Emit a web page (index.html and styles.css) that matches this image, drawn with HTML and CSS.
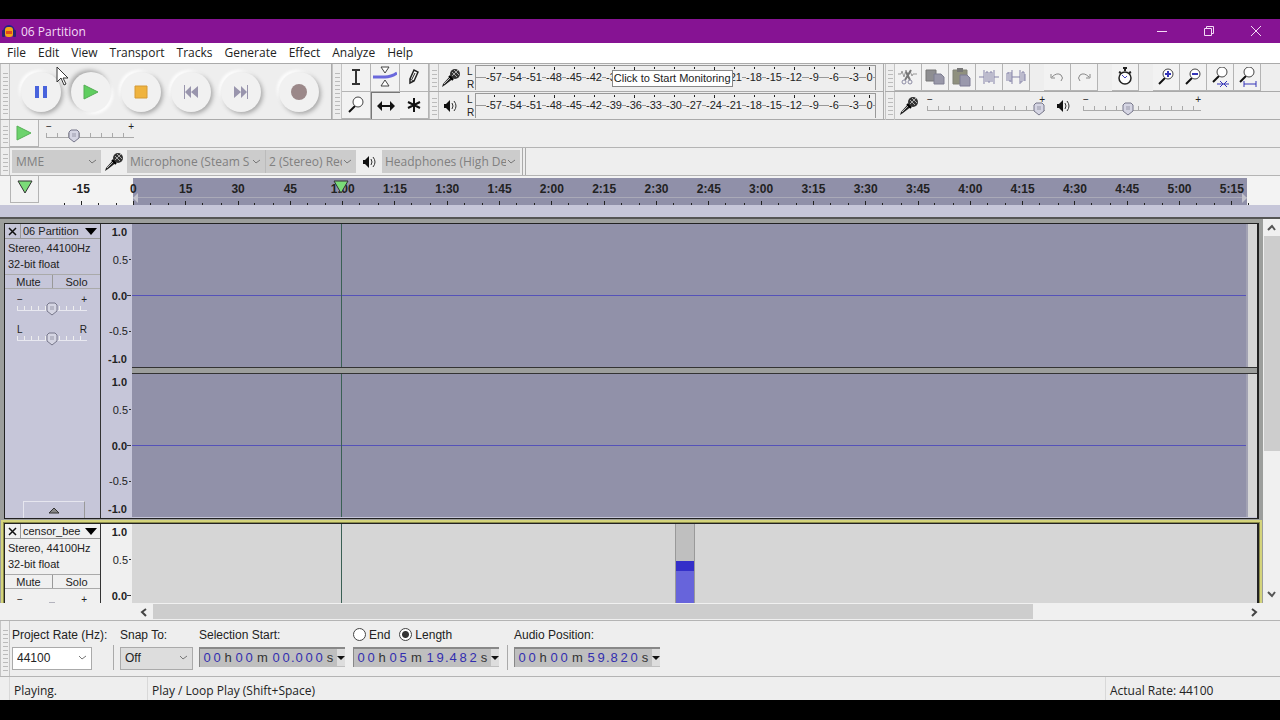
FILE: index.html
```html
<!DOCTYPE html>
<html lang="en">
<head>
  <meta charset="utf-8">
  <title>06 Partition</title>
  <link rel="stylesheet" href="styles.css">
</head>
<body>
  <svg class="defs" width="0" height="0" aria-hidden="true">
    <symbol id="mic" viewBox="0 0 20 20">
      <path d="M1 19l1-3 8-9 3 3-9 7z" fill="#222"/>
      <path d="M3 16l7-7" stroke="#bbb"/>
      <circle cx="14" cy="6" r="5" fill="#333"/>
      <path d="M11 4l5 5M13 2l5 5M11 8l6-6" stroke="#aaa"/>
      <path d="M8 8l4 4" stroke="#000" stroke-width="2"/>
    </symbol>
    <symbol id="speaker" viewBox="0 0 14 14">
      <path d="M0 5h2l4-4v12l-4-4H0z" fill="#111"/>
      <path d="M8 4q2 3 0 6M10 2q4 5 0 10" fill="none" stroke="#333"/>
    </symbol>
    <symbol id="lens" viewBox="0 0 20 20">
      <path d="M3 17l6-6" stroke="#111" stroke-width="2"/>
      <circle cx="12" cy="7" r="5" fill="#fff" stroke="#444"/>
    </symbol>
  </svg>

  <header class="titlebar">
    <svg width="14" height="14" viewBox="0 0 14 14">
      <path d="M2 8a5 6 0 0 1 10 0" fill="none" stroke="#22228a" stroke-width="2"/>
      <rect x="3" y="3" width="8" height="10" rx="3" fill="#f2a516"/>
      <path d="M4 7h6v3H4z" fill="#e2491c"/>
      <rect x="0" y="6" width="3" height="7" rx="1" fill="#252374"/>
      <rect x="11" y="6" width="3" height="7" rx="1" fill="#252374"/>
    </svg>
    <span class="title">06 Partition</span>
    <button aria-label="Minimize"><svg width="12" height="12"><path d="M1 6.500h10" stroke="#f3dcf5"/></svg></button>
    <button aria-label="Restore"><svg width="12" height="12" fill="none" stroke="#f3dcf5"><path d="M1.500 3.500h7v7h-7zM3.500 3v-1.500h7v7H9"/></svg></button>
    <button aria-label="Close"><svg width="12" height="12"><path d="M1 1l10 10M11 1L1 11" stroke="#f3dcf5"/></svg></button>
  </header>

  <nav class="menu">
    <button>File</button><button>Edit</button><button>View</button><button>Transport</button><button>Tracks</button><button>Generate</button><button>Effect</button><button>Analyze</button><button>Help</button>
  </nav>

  <div class="toolbars">
    <section class="transport">
      <i class="grip"></i>
      <div class="round-buttons">
        <button aria-label="Pause"><svg width="14" height="14"><path d="M1 1h4v12H1zM9 1h4v12H9z" fill="#4863dc"/></svg></button>
        <button class="pressed" aria-label="Play"><svg width="16" height="16"><path d="M1 1l14 7-14 7z" fill="#5fce5f" stroke="#55ad55"/></svg></button>
        <button aria-label="Stop"><svg width="14" height="14"><path d="M1 1h12v12H1z" fill="#efb33e" stroke="#d49a36"/></svg></button>
        <button aria-label="Skip to Start"><svg width="16" height="14" fill="#9995ad"><path d="M1 0h1v14H1zM8 1v12L2 7zM15 1v12L8 7z"/></svg></button>
        <button aria-label="Skip to End"><svg width="16" height="14" fill="#9995ad"><path d="M14 0h1v14h-1zM1 1v12l7-6zM8 1v12l6-6z"/></svg></button>
        <button class="record" aria-label="Record"><svg width="16" height="16"><circle cx="8" cy="8" r="8" fill="#9b8889"/></svg></button>
      </div>
    </section>

    <section class="tools">
      <i class="grip"></i>
      <div class="tool-grid">
        <button aria-label="Selection Tool"><svg width="10" height="16" fill="none" stroke="#333" stroke-width="2"><path d="M1 1h8M1 15h8M5 1v14"/></svg></button>
        <button aria-label="Envelope Tool"><svg width="24" height="22"><path d="M0 11h12q6 0 12-4" fill="none" stroke="#6a68dc" stroke-width="3"/><path d="M8 1h8l-4 6zM8 20h8l-4-6z" fill="#fff" stroke="#444"/></svg></button>
        <button aria-label="Draw Tool"><svg width="12" height="18"><path d="M2 15V11L6 2l4 2-4 9z" fill="#fff" stroke="#222" stroke-width="1.500"/><path d="M2 11l4 2M7 5l-3 6" stroke="#222"/></svg></button>
        <button aria-label="Zoom Tool"><svg width="20" height="20"><use href="#lens"/></svg></button>
        <button class="pressed" aria-label="Time Shift Tool"><svg width="18" height="12"><path d="M0 6l5-5v4h8V1l5 5-5 5V7H5v4z" fill="#111"/></svg></button>
        <button aria-label="Multi-Tool"><svg width="16" height="16"><path d="M8 1v14M2 5l12 6M14 5L2 11" stroke="#111" stroke-width="2"/></svg></button>
      </div>
    </section>

    <section class="meters">
      <div class="meter">
        <i class="grip"></i>
        <svg width="20" height="20"><use href="#mic"/></svg>
        <div class="lr"><span>L</span><span>R</span></div>
        <div class="db">
          <span><b>-57</b></span><span><b>-54</b></span><span><b>-51</b></span><span><b>-48</b></span><span><b>-45</b></span><span><b>-42</b></span><span><b>-39</b></span><span><b>-36</b></span><span><b>-33</b></span><span><b>-30</b></span><span><b>-27</b></span><span><b>-24</b></span><span><b>-21</b></span><span><b>-18</b></span><span><b>-15</b></span><span><b>-12</b></span><span><b>-9</b></span><span><b>-6</b></span><span><b>-3</b></span><span><b>0</b></span>
          <button class="monitor">Click to Start Monitoring</button>
        </div>
      </div>
      <div class="meter">
        <i class="grip"></i>
        <svg width="20" height="14"><use href="#speaker"/></svg>
        <div class="lr"><span>L</span><span>R</span></div>
        <div class="db">
          <span><b>-57</b></span><span><b>-54</b></span><span><b>-51</b></span><span><b>-48</b></span><span><b>-45</b></span><span><b>-42</b></span><span><b>-39</b></span><span><b>-36</b></span><span><b>-33</b></span><span><b>-30</b></span><span><b>-27</b></span><span><b>-24</b></span><span><b>-21</b></span><span><b>-18</b></span><span><b>-15</b></span><span><b>-12</b></span><span><b>-9</b></span><span><b>-6</b></span><span><b>-3</b></span><span><b>0</b></span>
        </div>
      </div>
    </section>

    <section class="side">
      <div class="edit">
        <i class="grip"></i>
        <div class="group">
          <button aria-label="Cut"><svg width="20" height="18" fill="none" stroke="#8c8ba4"><path d="M0 6h3l1-3 2 6 2-7 2 6 2-5 2 5 1-2h4" stroke="#999"/><path d="M13 2L7 12M8 4l4 8" stroke="#777" stroke-width="2"/><circle cx="6" cy="14" r="2"/><circle cx="12" cy="14" r="2"/></svg></button>
          <button aria-label="Copy"><svg width="20" height="18"><path d="M1 2h10v11H1z" fill="#8e8e91" stroke="#777"/><path d="M9 6h7l3 3v7H9z" fill="#9998a9" stroke="#7f7f91"/></svg></button>
          <button aria-label="Paste"><svg width="20" height="20"><path d="M1 3h14v14H1z" fill="#8f907e" stroke="#808176"/><path d="M5 1h6v4H5z" fill="#777"/><path d="M8 8h7l3 3v8H8z" fill="#9998ac" stroke="#7c7b94"/></svg></button>
          <button aria-label="Trim Audio"><svg width="20" height="16"><path d="M0 8h5M15 8h5M5 1v14M15 1v14M7 13V3M9 13V3M11 13V3M13 13V3M7 3h2M9 13h2M11 3h2" fill="none" stroke="#8583a8"/></svg></button>
          <button aria-label="Silence Audio"><svg width="20" height="16"><path d="M1 12V4M3 12V3M5 13V3M6 1v14M1 4h2M3 12h2M6 8h8M14 1v14M16 13V3M18 12V3M14 13h2M16 3h2M19 12V5" fill="none" stroke="#8583a8"/></svg></button>
        </div>
        <div class="group">
          <button aria-label="Undo"><svg width="16" height="12"><path d="M2 3v4h4M3 6q5-5 9-2 3 3 0 6" fill="none" stroke="#888"/></svg></button>
          <button aria-label="Redo"><svg width="16" height="12"><path d="M14 3v4h-4M13 6Q8 1 4 4q-3 3 0 6" fill="none" stroke="#888"/></svg></button>
        </div>
        <div class="group">
          <button aria-label="Sync-Lock Tracks"><svg width="18" height="20"><path d="M9 1v3M7 1h4M3 5l2 1M15 5l-2 1" stroke="#222" stroke-width="2"/><circle cx="9" cy="11" r="6" fill="#fff" stroke="#222" stroke-width="1.500"/><path d="M6 8l3 3 2-2" fill="none" stroke="#4545c0"/></svg></button>
        </div>
        <div class="group">
          <button aria-label="Zoom In"><svg width="20" height="20"><use href="#lens"/><path d="M9 7h6M12 4v6" stroke="#3535b8" stroke-width="2"/></svg></button>
          <button aria-label="Zoom Out"><svg width="20" height="20"><use href="#lens"/><path d="M9 7h6" stroke="#3535b8" stroke-width="2"/></svg></button>
          <button aria-label="Fit Selection"><svg width="20" height="20" viewBox="0 0 20 20"><use href="#lens" y="-2" width="20" height="20"/><path d="M7 17h12M10 14l3 3-3 3M17 14l-3 3 3 3" fill="none" stroke="#3535b8"/></svg></button>
          <button aria-label="Fit Project"><svg width="20" height="20" viewBox="0 0 20 20"><use href="#lens" y="-2" width="20" height="20"/><path d="M7 17h12M7 14v6M19 14v6" stroke="#3535b8"/></svg></button>
        </div>
      </div>
      <div class="mixer">
        <i class="grip"></i>
        <svg width="20" height="20"><use href="#mic"/></svg>
        <label class="slider"><span>−</span><span>+</span><input type="range" min="0" max="100" value="100" aria-label="Recording Volume"></label>
        <svg width="14" height="14"><use href="#speaker"/></svg>
        <label class="slider"><span>−</span><span>+</span><input type="range" min="0" max="100" value="37" aria-label="Playback Volume"></label>
      </div>
    </section>
  </div>

  <div class="bar speed">
    <i class="grip"></i>
    <button class="tool" aria-label="Play-at-Speed"><svg width="16" height="16"><path d="M1 1l14 7-14 7z" fill="#6cd36c" stroke="#57b057"/></svg></button>
    <label class="slider"><span>−</span><span>+</span><input type="range" min="0" max="100" value="29" aria-label="Playback Speed"></label>
  </div>

  <div class="bar devices">
    <i class="grip"></i>
    <select class="host" disabled aria-label="Audio Host"><option>MME</option></select>
    <svg width="20" height="20"><use href="#mic"/></svg>
    <select class="input" disabled aria-label="Recording Device"><option>Microphone (Steam S</option></select>
    <select class="channels" disabled aria-label="Recording Channels"><option>2 (Stereo) Rec</option></select>
    <svg width="14" height="14"><use href="#speaker"/></svg>
    <select class="output" disabled aria-label="Playback Device"><option>Headphones (High De</option></select>
    <i class="end"></i>
  </div>

  <div class="timeline">
    <span>-15</span><span>0</span><span>15</span><span>30</span><span>45</span><span>1:00</span><span>1:15</span><span>1:30</span><span>1:45</span><span>2:00</span><span>2:15</span><span>2:30</span><span>2:45</span><span>3:00</span><span>3:15</span><span>3:30</span><span>3:45</span><span>4:00</span><span>4:15</span><span>4:30</span><span>4:45</span><span>5:00</span><span>5:15</span>
    <div class="loop"></div>
    <button class="pin" aria-label="Pinned Play Head"><svg width="16" height="14"><path d="M1 1h14L8 13z" fill="#7bdc78" stroke="#333"/></svg></button>
    <svg class="head" width="16" height="14"><path d="M1 1h14L8 13z" fill="#7bdc78" stroke="#333"/></svg>
  </div>
  <div class="scrub"></div>

  <main class="workspace">
    <div class="tracks">
      <article class="track selected">
        <div class="panel">
          <div class="name"><button aria-label="Close track"><svg width="9" height="9"><path d="M1 1l7 7M8 1L1 8" stroke="#111" stroke-width="1.500"/></svg></button><button class="dropdown">06 Partition<svg width="12" height="7"><path d="M0 0h12L6 7z"/></svg></button></div>
          <p>Stereo, 44100Hz<br>32-bit float</p>
          <div class="mute"><button>Mute</button><button>Solo</button></div>
          <label class="slider"><span>−</span><span>+</span><input type="range" value="50" aria-label="Gain"></label>
          <label class="slider"><span>L</span><span>R</span><input type="range" value="50" aria-label="Pan"></label>
          <button class="collapse" aria-label="Collapse"><svg width="12" height="7"><path d="M1 6h10L6 1z" fill="#888" stroke="#333"/></svg></button>
        </div>
        <div class="channels-area">
          <div class="channel">
            <div class="vruler"><b>1.0</b><span>0.5</span><b class="zero">0.0</b><span>-0.5</span><b>-1.0</b></div>
            <div class="wave"><div class="clip"></div></div>
          </div>
          <div class="divider"></div>
          <div class="channel">
            <div class="vruler"><b>1.0</b><span>0.5</span><b class="zero">0.0</b><span>-0.5</span><b>-1.0</b></div>
            <div class="wave"><div class="clip"></div></div>
          </div>
        </div>
      </article>

      <article class="track focused">
        <div class="panel">
          <div class="name"><button aria-label="Close track"><svg width="9" height="9"><path d="M1 1l7 7M8 1L1 8" stroke="#111" stroke-width="1.500"/></svg></button><button class="dropdown">censor_bee<svg width="12" height="7"><path d="M0 0h12L6 7z"/></svg></button></div>
          <p>Stereo, 44100Hz<br>32-bit float</p>
          <div class="mute"><button>Mute</button><button>Solo</button></div>
          <label class="slider"><span>−</span><span>+</span><input type="range" value="50" aria-label="Gain"></label>
        </div>
        <div class="channels-area">
          <div class="channel">
            <div class="vruler"><b>1.0</b><span>0.5</span><b class="zero">0.0</b></div>
            <div class="wave"><div class="beep"></div></div>
          </div>
        </div>
      </article>
    </div>
    <div class="vscroll">
      <button aria-label="Scroll up"><svg width="9" height="7"><path d="M1 6l4-4 3 4" fill="none" stroke="#555" stroke-width="2"/></svg></button>
      <div class="thumb"></div>
      <button aria-label="Scroll down"><svg width="9" height="7"><path d="M1 1l4 4 3-4" fill="none" stroke="#555" stroke-width="2"/></svg></button>
    </div>
  </main>
  <div class="hscroll">
    <button aria-label="Scroll left"><svg width="7" height="9"><path d="M6 1L2 4l4 4" fill="none" stroke="#444" stroke-width="2"/></svg></button>
    <div class="thumb"></div>
    <button aria-label="Scroll right"><svg width="7" height="9"><path d="M1 1l4 3-4 4" fill="none" stroke="#444" stroke-width="2"/></svg></button>
  </div>

  <div class="selection">
    <i class="grip"></i>
    <div class="field rate"><label for="rate">Project Rate (Hz):</label><select id="rate"><option>44100</option></select></div>
    <i class="rule"></i>
    <div class="field snap"><label for="snap">Snap To:</label><select id="snap"><option>Off</option></select></div>
    <div class="field">
      <span class="caption">Selection Start:</span>
      <div class="time" role="group" aria-label="Selection Start"><i>0</i><i>0</i><b>h</b><i>0</i><i>0</i><b class="m">m</b><i>0</i><i>0</i><i class="dot">.</i><i>0</i><i>0</i><i>0</i><b>s</b><button aria-label="Format"></button></div>
    </div>
    <div class="field">
      <div class="caption"><label><input type="radio" name="range">End</label><label><input type="radio" name="range" checked>Length</label></div>
      <div class="time" role="group" aria-label="Length"><i>0</i><i>0</i><b>h</b><i>0</i><i>5</i><b class="m">m</b><i>1</i><i>9</i><i class="dot">.</i><i>4</i><i>8</i><i>2</i><b>s</b><button aria-label="Format"></button></div>
    </div>
    <i class="rule"></i>
    <div class="field">
      <span class="caption">Audio Position:</span>
      <div class="time" role="group" aria-label="Audio Position"><i>0</i><i>0</i><b>h</b><i>0</i><i>0</i><b class="m">m</b><i>5</i><i>9</i><i class="dot">.</i><i>8</i><i>2</i><i>0</i><b>s</b><button aria-label="Format"></button></div>
    </div>
  </div>

  <footer class="status">
    <span class="state">Playing.</span>
    <span class="hint">Play / Loop Play (Shift+Space)</span>
    <span class="actual">Actual Rate: 44100</span>
  </footer>

  <svg class="pointer" width="13" height="20"><path d="M1 1v15l4-4 3 7 2-1-3-6h5z" fill="#fff" stroke="#333"/></svg>
</body>
</html>
```
FILE: styles.css
```css
* {
  box-sizing: border-box;
}

body {
  display: flex;
  flex-direction: column;
  height: 100vh;
  margin: 0;
  padding: 19px 0 20px;
  overflow: hidden;
  background: #000;
  color: #222;
  font-family: "Open Sans", "Noto Sans", sans-serif;
  font-size: 12px;
}

button, select, input {
  margin: 0;
  padding: 0;
  border: 0;
  border-radius: 0;
  background: none;
  color: inherit;
  font: inherit;
}

svg {
  display: block;
  flex: none;
}

.defs {
  position: absolute;
}

/* title and menu */
.titlebar {
  display: flex;
  align-items: center;
  flex: none;
  height: 24px;
  padding: 0 1px 0 2px;
  background: #861393;
  color: #f3dcf5;
}

.title {
  flex: 1;
  padding-left: 5px;
}

.titlebar button {
  display: flex;
  align-items: center;
  justify-content: center;
  width: 47px;
  height: 23px;
}

.menu {
  display: flex;
  gap: 12px;
  flex: none;
  height: 20px;
  padding: 0 7px;
  background: #fff;
}

.menu button {
  line-height: 18px;
  height: 19px;
}

/* toolbars */
.toolbars {
  display: flex;
  flex: none;
  height: 57px;
  border-top: 1px solid #aaa;
  border-bottom: 1px solid #aaa;
  background: #eee;
}

.grip {
  flex: none;
  width: 10px;
  align-self: stretch;
  border: 1px solid #c4c4c4;
  border-width: 0 1px;
  background: repeating-linear-gradient(#eee 0 3px, #bbb 3px 4px) center / 5px 80% no-repeat;
}

.transport, .tools, .meter, .edit, .mixer {
  display: flex;
  align-items: center;
}

.transport {
  align-items: stretch;
  width: 332px;
  border-right: 1px solid #aaa;
}

.round-buttons {
  display: flex;
  align-items: center;
  gap: 10px;
  padding-left: 11px;
}

.round-buttons button {
  display: flex;
  align-items: center;
  justify-content: center;
  width: 40px;
  height: 40px;
  border-radius: 50%;
  background: #f1f1f1;
  box-shadow: 2px 2px 4px #aaa, -2px -2px 3px #fff;
}

.round-buttons .pressed {
  box-shadow: -2px -2px 4px #aaa, 2px 2px 3px #fff;
}

.round-buttons .record {
  margin-left: 8px;
}

.tools {
  align-items: stretch;
  width: 97px;
}

.tool-grid {
  display: grid;
  flex: 1;
  grid-template-columns: repeat(3, 1fr);
  grid-template-rows: 1fr 1fr;
}

.tool-grid button, .group button, .tool, .pin {
  display: flex;
  align-items: center;
  justify-content: center;
  border: 1px solid #b4b4b4;
  border-width: 0 1px 1px 0;
  background: #f2f2f2;
}

.tool-grid .pressed {
  border-width: 1px 0 0 1px;
  border-color: #777;
  background: #eee;
}

.meters {
  width: 455px;
  border-right: 1px solid #aaa;
  font-family: "Liberation Sans", Arial, sans-serif;
  font-size: 11px;
}

.meter {
  height: 28px;
  padding-right: 7px;
  border-bottom: 1px solid #aaa;
}

.meter > svg {
  margin: 0 6px 0 2px;
}

.lr {
  display: flex;
  flex-direction: column;
  width: 8px;
  font-size: 10px;
  line-height: 13px;
}

.db {
  position: relative;
  display: grid;
  grid-template-columns: repeat(19, 1fr) 11px;
  flex: 1;
  height: 25px;
  padding-left: 8px;
  border: 1px solid #999;
  border-width: 1px 1px 0;
  background: linear-gradient(#999, #999) 0 11px / 100% 1px no-repeat;
}

.db span {
  display: flex;
  justify-content: center;
  padding-top: 4px;
  background: linear-gradient(#222, #222) 50% 1px / 1px 2px no-repeat;
}

.db span:nth-child(4n) {
  background-size: 1px 4px;
}

.db b {
  align-self: start;
  background: #eee;
  font-weight: normal;
  line-height: 14px;
}

.monitor {
  position: absolute;
  top: 4px;
  left: 34%;
  width: 121px;
  height: 17px;
  border: 1px solid #888;
  background: #fff;
  line-height: 15px;
  white-space: nowrap;
}

.side {
  flex: 1;
  padding-left: 1px;
}

.edit, .mixer {
  height: 28px;
}

.edit {
  gap: 14px;
  border-bottom: 1px solid #aaa;
}

.edit .grip {
  margin-right: -14px;
}

.group {
  display: flex;
  align-self: stretch;
}

.group button {
  width: 27px;
}

.mixer > svg {
  margin: 0 6px 0 4px;
}

.mixer .slider {
  width: 122px;
}

.mixer .slider + svg {
  margin: 0 10px;
}

.slider {
  display: grid;
  grid-template-columns: 1fr 1fr;
  grid-template-rows: 5px 16px;
  padding: 0 2px;
  font-family: "Liberation Sans", Arial, sans-serif;
  font-size: 10px;
  line-height: 8px;
}

.slider span + span {
  text-align: right;
}

.slider input {
  grid-column: 1 / 3;
  width: 100%;
  height: 16px;
  appearance: none;
  background:
    linear-gradient(#aaa, #aaa) 0 9px / 100% 1px no-repeat,
    repeating-linear-gradient(90deg, #aaa 0 1px, transparent 1px 11px) 0 5px / 100% 4px no-repeat;
}

.slider input::-webkit-slider-thumb {
  width: 12px;
  height: 14px;
  appearance: none;
  background: url("data:image/svg+xml,%3Csvg xmlns='http://www.w3.org/2000/svg' width='12' height='14'%3E%3Cpath d='M3 1h6l2 2v6l-5 4-5-4V3z' fill='%23d5d5e3' stroke='%2377778a'/%3E%3Cpath d='M4 5h4M4 7h4' stroke='%239999aa'/%3E%3C/svg%3E") no-repeat;
}

.bar {
  display: flex;
  align-items: center;
  flex: none;
  height: 28px;
  border-bottom: 1px solid #b4b4b4;
  background: #eee;
}

.speed .slider {
  width: 92px;
  margin-left: 5px;
}

.tool {
  align-self: stretch;
  width: 29px;
}

.devices > svg {
  margin: 0 3px;
}

select {
  appearance: none;
  height: 23px;
  padding: 0 16px 0 4px;
  background: #ccc url("data:image/svg+xml,%3Csvg xmlns='http://www.w3.org/2000/svg' width='9' height='6'%3E%3Cpath d='M1 1l3 3 4-3' fill='none' stroke='%23777'/%3E%3C/svg%3E") right 4px center no-repeat;
}

select:disabled {
  color: #808080;
  opacity: 1;
}

.host {
  width: 89px;
  margin-left: 2px;
}

.input {
  width: 138px;
}

.devices .input, .devices .channels, .devices .output {
  padding: 0 14px 0 3px;
}

.channels {
  width: 91px;
  border-left: 1px solid #bbb;
}

.devices .channels + svg {
  margin: 0 5px 0 7px;
}

.output {
  width: 138px;
}

.end {
  align-self: stretch;
  width: 4px;
  margin-left: 2px;
  border: 1px solid #aaa;
  border-width: 0 1px;
}

/* timeline */
.timeline {
  position: relative;
  display: grid;
  grid-template-columns: repeat(23, 1fr);
  flex: none;
  height: 29px;
  padding: 0 22px 0 55px;
  background: linear-gradient(#9090a9, #9090a9) 133px 2px / calc(100% - 166px) 100% no-repeat #f3f3f3;
  font: bold 12px/26px "Liberation Sans", Arial, sans-serif;
}

.timeline span {
  text-align: center;
  background:
    linear-gradient(#222, #222) 50% 100% / 1px 4px no-repeat,
    linear-gradient(#222, #222) 17% 100% / 1px 2px no-repeat,
    linear-gradient(#222, #222) 83% 100% / 1px 2px no-repeat;
}

.loop {
  position: absolute;
  top: 21px;
  right: 33px;
  left: 133px;
  border-top: 1px solid #aaaab8;
}

.loop::before, .loop::after {
  content: "";
  position: absolute;
  top: -5px;
  left: 0;
  border: 5px solid transparent;
  border-left-width: 0;
  border-right-color: #c2c2cc;
}

.loop::after {
  right: 0;
  left: auto;
  border-width: 5px 0 5px 5px;
  border-left-color: #c2c2cc;
}

.pin {
  position: absolute;
  top: 0;
  left: 10px;
  width: 29px;
  height: 27px;
  padding-bottom: 5px;
  border-left-width: 1px;
}

.head {
  position: absolute;
  top: 4px;
  left: 26%;
}

.scrub {
  flex: none;
  height: 14px;
  border-bottom: 2px solid #555;
  background: #c6c6d9;
}

/* tracks */
.workspace {
  display: flex;
  flex: 1;
  min-height: 0;
  background: #eee;
}

.tracks {
  flex: 1;
  padding: 4px 4px 0;
  overflow: hidden;
  background: #9c9e9c;
  font-family: "Liberation Sans", Arial, sans-serif;
  font-size: 11px;
}

.track {
  display: flex;
  height: 296px;
  margin-bottom: 4px;
  border: 1px solid #222;
  border-right-width: 2px;
  background: #f0f0f0;
}

.selected {
  background: #c6c6d9;
}

.focused {
  box-shadow: 0 0 0 1px #8b8b4a, 0 0 0 3px #d4d47c;
}

.panel {
  display: flex;
  flex-direction: column;
  width: 96px;
  border-right: 1px solid #333;
}

.name {
  display: flex;
  height: 15px;
  border-bottom: 1px solid #999;
}

.name button {
  display: flex;
  align-items: center;
  justify-content: center;
  width: 16px;
  border-right: 1px solid #999;
}

.name .dropdown {
  flex: 1;
  justify-content: space-between;
  padding: 0 3px 0 2px;
  border: 0;
}

.panel p {
  margin: 0;
  padding: 1px 3px 2px;
  line-height: 16px;
}

.mute {
  display: flex;
  height: 15px;
  border: 1px solid #aaa;
  border-width: 1px 0;
}

.mute button {
  flex: 1;
  line-height: 12px;
}

.mute button + button {
  border-left: 1px solid #999;
}

.panel .slider {
  width: 74px;
  margin: 7px 0 0 10px;
}

.panel .slider + .slider {
  margin-top: 9px;
}

.selected .slider input {
  background:
    linear-gradient(#e8e8f0, #e8e8f0) 0 9px / 100% 1px no-repeat,
    repeating-linear-gradient(90deg, #eee 0 1px, transparent 1px 7px) 0 5px / 100% 4px no-repeat;
}

.collapse {
  display: flex;
  align-items: center;
  justify-content: center;
  width: 62px;
  height: 17px;
  margin: auto auto 0 18px;
  border: 1px solid #e6e6ef;
  border-right-color: #999;
  border-bottom: 0;
}

.channels-area {
  display: flex;
  flex: 1;
  flex-direction: column;
}

.channel {
  display: flex;
  height: 143px;
}

.vruler {
  display: grid;
  grid-template-rows: 16px 1fr 32px 1fr 16px;
  width: 31px;
}

.vruler > * {
  display: flex;
  align-items: center;
  justify-content: flex-end;
  padding-right: 5px;
}

.vruler span, .vruler .zero {
  padding-right: 1px;
}

.vruler span::after, .vruler .zero::after {
  content: "";
  width: 2px;
  height: 1px;
  margin-left: 1px;
  background: #333;
}

.vruler .zero::after {
  width: 4px;
  margin-left: 0;
}

.wave {
  position: relative;
  flex: 1;
  padding-right: 9px;
  background: #d6d6d6;
}

/* play cursor */
.wave::after {
  content: "";
  position: absolute;
  top: 0;
  left: 18.6%;
  height: 100%;
  border-left: 1px solid #3a6055;
}

.clip {
  height: 100%;
  border-right: 2px solid #a2a2b3;
  background: linear-gradient(#5552b9, #5552b9) 0 71px / 100% 1px no-repeat #9191a9;
}

.beep {
  width: 20px;
  height: 100%;
  margin-left: 48.7%;
  border: 1px solid #999;
  border-width: 0 1px;
  background: linear-gradient(#bfbfbf 37px, #342fc9 37px 47px, #6764db 47px);
}

.divider {
  height: 7px;
  margin-left: 31px;
  border: 1px solid #333;
  border-width: 1px 0;
  background: #9c9e9c;
}

/* scroll bars */
.vscroll {
  display: flex;
  flex-direction: column;
  width: 17px;
  background: #f0f0f0;
}

.vscroll button, .hscroll button {
  display: flex;
  align-items: center;
  justify-content: center;
  width: 17px;
  height: 17px;
}

.vscroll .thumb {
  flex: 0 0 56%;
  margin: 0 0 auto 1px;
  background: #cdcdcd;
}

.hscroll {
  display: flex;
  flex: none;
  height: 18px;
  padding: 1px 17px 0 135px;
  border-bottom: 1px solid #b4b4b4;
  background: #f0f0f0;
}

.hscroll .thumb {
  width: 78%;
  height: 15px;
  margin: 0 auto 0 1px;
  background: #cdcdcd;
}

/* selection toolbar */
.selection {
  display: flex;
  align-items: center;
  flex: none;
  height: 56px;
  border-bottom: 1px solid #b4b4b4;
  background: #eee;
  font-family: "Liberation Sans", Arial, sans-serif;
}

.field {
  display: flex;
  flex-direction: column;
  gap: 3px;
  margin: 0 8px 2px 0;
}

.field > :first-child {
  height: 18px;
  line-height: 18px;
  white-space: nowrap;
}

.rate {
  width: 95px;
  margin: 0 6px 2px 2px;
}

.field select {
  border: 1px solid #aaa;
  background-color: #ddd;
}

.field #rate {
  width: 80px;
  background-color: #fff;
}

.snap {
  width: 73px;
  margin-right: 6px;
}

.rule {
  width: 1px;
  height: 25px;
  margin: 18px 6px 0 0;
  background: #aaa;
}

.caption {
  display: flex;
}

.caption label {
  display: flex;
  align-items: center;
  gap: 3px;
  margin-right: 9px;
}

.caption input {
  appearance: none;
  width: 13px;
  height: 13px;
  border: 1px solid #444;
  border-radius: 50%;
  background: #fff;
}

.caption input:checked {
  background: radial-gradient(#333 0 3px, #fff 4px);
}

.time {
  display: flex;
  align-items: center;
  width: 146px;
  height: 20px;
  margin-bottom: 3px;
  padding-left: 2px;
  border: 1px solid #888;
  border-width: 2px 0 0 1px;
  background: #bfbfbf;
  font-size: 13px;
  line-height: 16px;
}

.time i, .time b {
  flex: none;
  width: 10px;
  color: #322eb0;
  font-style: normal;
  font-weight: normal;
  text-align: center;
}

.time b {
  width: 12px;
  color: #333;
}

.time .m {
  width: 17px;
}

.time .dot {
  width: 3px;
}

.time button {
  width: 8px;
  height: 17px;
  margin-left: auto;
  background: #ddd;
}

.time button::before {
  content: "";
  display: block;
  border: 4px solid transparent;
  border-top-color: #111;
  border-bottom: 0;
}

/* status bar */
.status {
  display: flex;
  flex: none;
  height: 23px;
  padding-left: 9px;
  background: #eee;
  line-height: 27px;
}

.status span {
  padding-left: 4px;
  border-left: 1px solid #d8d8d8;
}

.state {
  width: 138px;
}

.hint {
  flex: 1;
}

.actual {
  width: 175px;
}

.pointer {
  position: absolute;
  top: 66px;
  left: 56px;
}
```
